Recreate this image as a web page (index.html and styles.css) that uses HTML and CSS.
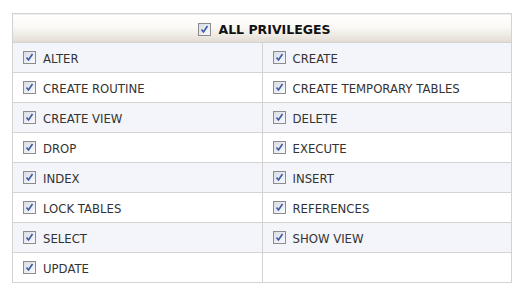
FILE: index.html
```html
<!DOCTYPE html>
<html lang="en">
<head>
    <meta charset="UTF-8">
    <title>Privileges</title>
    <link rel="stylesheet" href="styles.css">
</head>
<body>
<table class="priv-table">
  <thead>
    <tr>
      <th colspan="2">
        <label class="priv-all">
          <span class="box"><svg width="13" height="13" viewBox="0 0 13 13"><rect x="0.5" y="0.5" width="12" height="12" fill="url(#g)" stroke="#8c8c8c"/><path d="M3.5 6.5 L5.5 9 L9.5 3" fill="none" stroke="#3a5aa6" stroke-width="1.6"/></svg></span>
          ALL PRIVILEGES
        </label>
      </th>
    </tr>
  </thead>
  <tbody id="priv-body"></tbody>
</table>
<svg width="0" height="0" class="defs">
  <defs>
    <linearGradient id="g" x1="0" y1="0" x2="1" y2="1">
      <stop offset="0" stop-color="#d7dbe3"/>
      <stop offset="1" stop-color="#fbfbfc"/>
    </linearGradient>
  </defs>
</svg>
<script>
var privs = ['ALTER', 'CREATE', 'CREATE ROUTINE', 'CREATE TEMPORARY TABLES',
  'CREATE VIEW', 'DELETE', 'DROP', 'EXECUTE', 'INDEX', 'INSERT',
  'LOCK TABLES', 'REFERENCES', 'SELECT', 'SHOW VIEW', 'UPDATE'];
var box = document.querySelector('.priv-all .box').innerHTML;
var body = document.getElementById('priv-body');
for (var i = 0; i < privs.length; i += 2) {
  var tr = document.createElement('tr');
  for (var j = i; j < i + 2; j++) {
    var td = document.createElement('td');
    if (privs[j]) {
      td.innerHTML = '<label><span class="box">' + box + '</span><span class="name">' + privs[j] + '</span></label>';
    }
    tr.appendChild(td);
  }
  body.appendChild(tr);
}
</script>
</body>
</html>
```

FILE: styles.css
```css
body {
    margin: 0;
    padding: 13px 10px 0 12px;
    background: #fff;
    font-family: 'DejaVu Sans', Verdana, sans-serif;
    color: #333;
}
.defs {
    position: absolute;
}
.priv-table {
    width: 500px;
    border-collapse: collapse;
    table-layout: fixed;
}
.priv-table th {
    height: 28px;
    padding: 0 0 0 5px;
    border: 1px solid #d3d3d3;
    background: linear-gradient(#fff 0%, #fbf9f6 45%, #e2dbd3 100%);
    font-size: 12.5px;
    font-weight: bold;
    color: #111;
    text-align: center;
}
.priv-table td {
    height: 29px;
    padding: 0 0 0 10px;
    border: 1px solid #d3d3d3;
    font-size: 11.7px;
    color: #333;
}
.priv-table tbody tr:nth-child(odd) td {
    background: #f4f5fb;
}
.priv-table label {
    display: flex;
    align-items: center;
}
.name {
    padding-top: 2px;
}
.priv-all {
    justify-content: center;
    padding-top: 2px;
}
.box {
    display: inline-flex;
    margin-right: 7px;
}
```
